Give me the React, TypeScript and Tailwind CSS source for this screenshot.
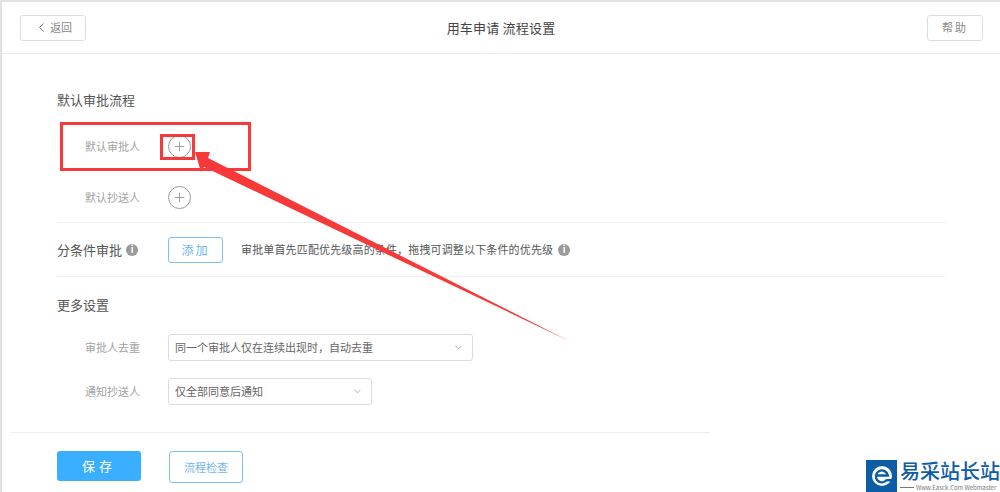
import React from 'react';
import { ChevronLeft, ChevronDown, Plus } from 'lucide-react';

const InfoDot = () => (
  <span className="flex h-[12px] w-[12px] items-center justify-center rounded-full bg-[#9a9a9a] text-[9px] font-bold leading-none text-white">
    i
  </span>
);

const AddCircle = () => (
  <span className="flex h-[23px] w-[23px] items-center justify-center rounded-full border border-[#999] text-[#808080]">
    <Plus size={15} strokeWidth={1.2} />
  </span>
);

const SelectBox = ({ text, width }: { text: string; width: string }) => (
  <div className={`flex h-[27px] items-center justify-between rounded-[3px] border border-[#dcdcdc] bg-white pl-[6px] pr-[8px] text-[11px] text-[#666] ${width}`}>
    <span>{text}</span>
    <ChevronDown size={11} className="text-[#aaa]" />
  </div>
);

const App: React.FC = () => {
  return (
    <div className="relative h-[492px] w-[1000px] overflow-hidden bg-[#e2e2e2] pl-[2px] pt-[2px] font-['Noto_Sans_CJK_SC','Noto_Sans',sans-serif]">
      <div className="h-[490px] bg-white">
        {/* header */}
        <div className="flex h-[52px] items-center justify-between border-b border-[#eee] pl-[18px] pr-[17px]">
          <button className="flex h-[26px] w-[66px] items-center justify-center gap-[1px] rounded-[3px] border border-[#ddd] text-[11px] text-[#888]">
            <ChevronLeft size={15} strokeWidth={1.5} className="text-[#666]" />
            返回
          </button>
          <div className="mr-[11px] text-[13px] tracking-[0.2px] text-[#444]">用车申请 流程设置</div>
          <button className="h-[26px] w-[56px] rounded-[3px] border border-[#ddd] text-[11px] tracking-[2px] text-[#888]">
            帮助
          </button>
        </div>

        {/* body */}
        <div className="pl-[55px] pr-[55px]">
          <h2 className="mt-[37px] text-[13px] leading-[18px] text-[#555]">默认审批流程</h2>

          <div className="mt-[25px] flex h-[24px] items-center text-[11px] text-[#a3a3a3]">
            <span className="ml-[28px] w-[83px]">默认审批人</span>
            <AddCircle />
          </div>
          <div className="mt-[27px] flex h-[24px] items-center text-[11px] text-[#a3a3a3]">
            <span className="ml-[28px] w-[83px]">默认抄送人</span>
            <AddCircle />
          </div>

          <div className="mt-[13px] flex h-[55px] items-center border-y border-[#eee]">
            <span className="text-[13px] text-[#555]">分条件审批</span>
            <span className="ml-[4px]"><InfoDot /></span>
            <button className="ml-[30px] h-[26px] w-[55px] rounded-[3px] border border-[#7cc0f5] text-[12px] tracking-[2px] text-[#6db6f0]">
              添加
            </button>
            <span className="ml-[18px] text-[11px] tracking-[0.15px] text-[#555]">审批单首先匹配优先级高的条件，拖拽可调整以下条件的优先级</span>
            <span className="ml-[5px]"><InfoDot /></span>
          </div>

          <h2 className="mt-[19px] text-[13px] leading-[18px] text-[#555]">更多设置</h2>

          <div className="mt-[20px] flex items-center text-[11px]">
            <span className="ml-[28px] w-[83px] text-[#a3a3a3]">审批人去重</span>
            <SelectBox text="同一个审批人仅在连续出现时，自动去重" width="w-[305px]" />
          </div>
          <div className="mt-[17px] flex items-center text-[11px]">
            <span className="ml-[28px] w-[83px] text-[#a3a3a3]">通知抄送人</span>
            <SelectBox text="仅全部同意后通知" width="w-[204px]" />
          </div>
        </div>

        {/* footer */}
        <div className="ml-[9px] mt-[27px] w-[699px] border-t border-[#eee] pl-[46px] pt-[18px]">
          <div className="flex items-start">
            <button className="h-[30px] w-[84px] rounded-[3px] bg-[#3aaeff] text-[13px] tracking-[4px] text-white">
              保存
            </button>
            <button className="ml-[28px] h-[32px] w-[74px] rounded-[3px] border border-[#7cc0f5] text-[11px] text-[#6db6f0]">
              流程检查
            </button>
          </div>
        </div>
      </div>

      {/* red annotations */}
      <div className="absolute left-[60px] top-[122px] h-[49px] w-[191px] border-[3px] border-[#f63a3a]" />
      <div className="absolute left-[160px] top-[134px] h-[26px] w-[35px] border-[3px] border-[#f63a3a]" />
      <svg className="absolute left-0 top-0" width="1000" height="492" viewBox="0 0 1000 492">
        <polygon points="195,152 210,152 208,158 569,341 204,167 201,172" fill="#f63a3a" />
      </svg>

      {/* watermark logo */}
      <div className="absolute bottom-0 right-0 flex h-[32px] w-[134px] bg-white">
        <div className="flex h-[32px] w-[31px] items-center justify-center bg-[#0c5da5]">
          <svg width="20" height="20" viewBox="0 0 20 20">
            <circle cx="10" cy="10" r="10" fill="white" />
            <path d="M15 13.5A6 6 0 1 1 15.8 9.5H5" fill="none" stroke="#0c5da5" strokeWidth="2.4" />
            <path d="M15 13H20V15.5H15Z" fill="#0c5da5" />
          </svg>
        </div>
        <div className="ml-[3px] flex flex-col">
          <span className="whitespace-nowrap text-[20px] font-medium leading-[22px] text-[#0c5da5]">易采站长站</span>
          <span className="mt-[2px] flex items-center whitespace-nowrap text-[6px] leading-[7px] text-[#777]">
            <span className="mr-[2px] h-px w-[14px] bg-[#777]" />
            Www.Easck.Com Webmaster
          </span>
        </div>
      </div>
    </div>
  );
};

export default App;
